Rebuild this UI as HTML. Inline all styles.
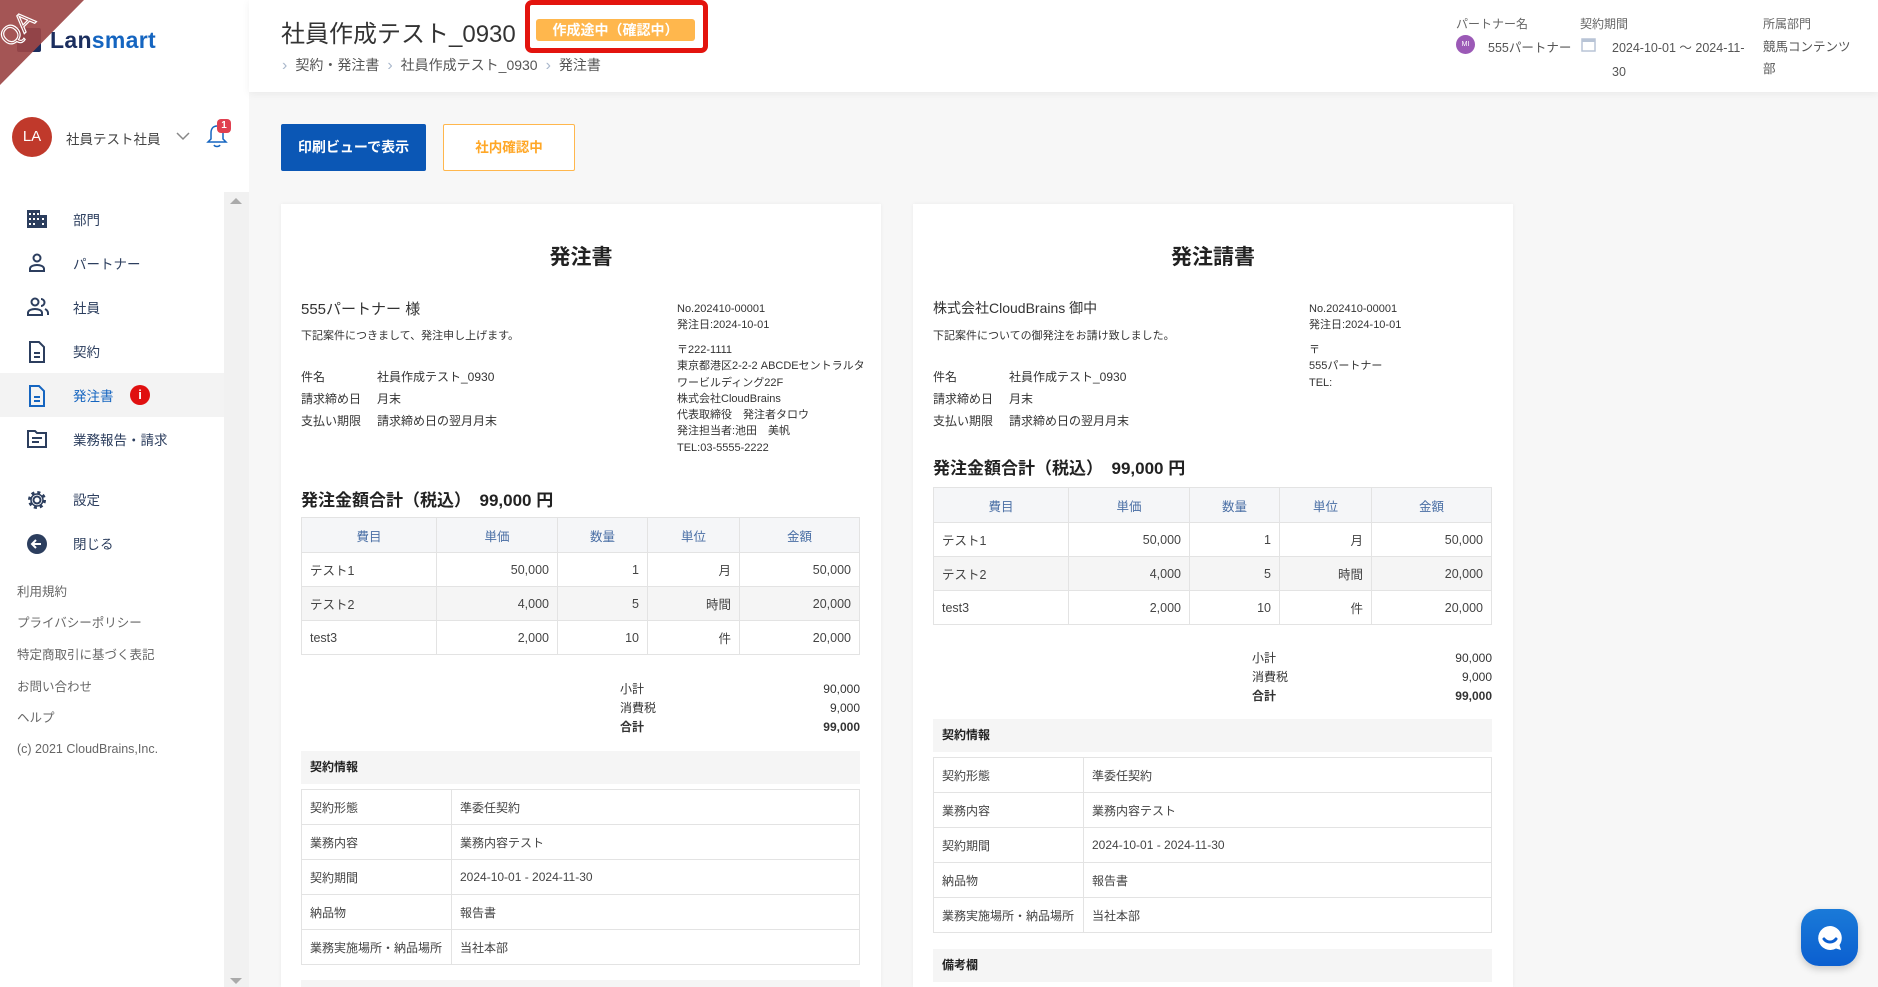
<!DOCTYPE html>
<html style="overflow:hidden;height:987px"><head><meta charset="utf-8"><style>
*{box-sizing:border-box;margin:0;padding:0}
body{width:1878px;height:987px;overflow:hidden;background:#f7f7f7;font-family:"Liberation Sans","Noto Sans CJK JP",sans-serif;color:#333;position:relative}
.a{position:absolute;white-space:nowrap}
#side{position:absolute;left:0;top:0;width:249px;height:987px;background:#fff}
.nav{position:absolute;left:0;width:224px;height:44px;display:flex;align-items:center;font-size:13.5px;color:#2c3e5e}
.nav svg{position:absolute;left:26px;top:12px}
.nav span{position:absolute;left:73px}
.foot{position:absolute;left:17px;font-size:12.5px;color:#666}
#hdr{position:absolute;left:249px;top:0;width:1629px;height:92px;background:#fff;box-shadow:0 2px 8px rgba(0,0,0,.06)}
.card{position:absolute;top:204px;width:600px;height:783px;background:#fff;box-shadow:0 0 4px rgba(0,0,0,.05);overflow:hidden}
.card .a{font-size:12px;color:#333}
table{border-collapse:collapse;position:absolute;left:20px;width:559px;font-size:12.5px;color:#444}
.it td,.it th{border:1px solid #e3e3e3;height:34px;padding:0 8px}
.it th{background:#f5f6f8;color:#4a6fa5;font-weight:normal;height:35px}
.it tr:nth-child(3) td{background:#f5f5f5}
.it td.r{text-align:right}
.bar{position:absolute;left:20px;width:559px;height:33px;background:#f5f5f5;font-size:12px;font-weight:bold;padding:0 9px;line-height:33px;color:#222}
.ci td{border:1px solid #e3e3e3;height:35px;padding:0 8px;font-size:12px}
.ci td:first-child{width:150px}
.rc{position:absolute;left:396px;font-size:11px;line-height:16.3px;color:#333}
.sum{position:absolute;left:339px;width:240px;font-size:12px;line-height:19px}
.sum div{display:flex;justify-content:space-between}
.bc{color:#aab8cc;font-size:16px;margin:0 8px}
</style></head><body>

<div id="side">
  <div class="a" style="left:17px;top:28px;width:24px;height:24px;background:#1b2e5e;border-radius:2px"></div>
  <div class="a" style="left:50px;top:27px;font-size:23px;font-weight:bold;color:#1b2e5e;letter-spacing:.3px">Lan<span style="color:#1565c0">smart</span></div>
  <svg class="a" style="left:0;top:0" width="90" height="90"><polygon points="0,0 84,0 0,85" fill="#9c4747" opacity=".92"/><text x="0" y="0" transform="translate(10 48) rotate(-45)" font-size="26" fill="none" stroke="#fff" stroke-width="1.2" font-family="Liberation Sans">QA</text></svg>
  <div class="a" style="left:12px;top:117px;width:40px;height:40px;border-radius:50%;background:#c0392b;color:#fff;font-size:15px;text-align:center;line-height:40px">LA</div>
  <div class="a" style="left:66px;top:128px;font-size:13.5px;color:#444">社員テスト社員</div>
  <svg class="a" style="left:175px;top:130px" width="16" height="12"><path d="M2 3l6 6 6-6" stroke="#888" stroke-width="1.5" fill="none"/></svg>
  <svg class="a" style="left:205px;top:122px" width="24" height="28"><path d="M12 4c-4 0-6 3-6 7v6l-3 3h18l-3-3v-6c0-4-2-7-6-7zM9 23c1 2 5 2 6 0" stroke="#1565c0" stroke-width="1.5" fill="none"/></svg>
  <div class="a" style="left:217px;top:119px;width:14px;height:14px;border-radius:4px;background:#e04050;color:#fff;font-size:10px;font-weight:bold;text-align:center;line-height:14px">1</div>

  <div class="a" style="left:224px;top:192px;width:25px;height:795px;background:#f1f1f1"></div>
  <svg class="a" style="left:229px;top:197px" width="14" height="8"><path d="M1 7l6-6 6 6z" fill="#aaa"/></svg>
  <svg class="a" style="left:229px;top:977px" width="14" height="8"><path d="M1 1l6 6 6-6z" fill="#aaa"/></svg>

  <div class="nav" style="top:197px"><svg width="22" height="20"><rect x="1" y="1" width="13" height="18" fill="#2c3e5e"/><rect x="14" y="6" width="7" height="13" fill="#2c3e5e"/><g fill="#fff"><rect x="3" y="4" width="2" height="2"/><rect x="7" y="4" width="2" height="2"/><rect x="11" y="4" width="2" height="2"/><rect x="3" y="9" width="2" height="2"/><rect x="7" y="9" width="2" height="2"/><rect x="11" y="9" width="2" height="2"/><rect x="3" y="14" width="2" height="2"/><rect x="7" y="14" width="2" height="2"/><rect x="16" y="9" width="2" height="2"/><rect x="16" y="14" width="2" height="2"/></g></svg><span>部門</span></div>
  <div class="nav" style="top:241px"><svg width="22" height="20"><circle cx="11" cy="5" r="3.5" stroke="#2c3e5e" stroke-width="2" fill="none"/><path d="M4 18v-2c0-3 4-4 7-4s7 1 7 4v2z" stroke="#2c3e5e" stroke-width="2" fill="none"/></svg><span>パートナー</span></div>
  <div class="nav" style="top:285px"><svg width="24" height="20"><circle cx="9" cy="5" r="3.5" stroke="#2c3e5e" stroke-width="2" fill="none"/><path d="M2 18v-2c0-3 4-4 7-4s7 1 7 4v2z" stroke="#2c3e5e" stroke-width="2" fill="none"/><path d="M15 2a3.5 3.5 0 010 7M19 12c2 1 3 2 3 4v2" stroke="#2c3e5e" stroke-width="2" fill="none"/></svg><span>社員</span></div>
  <div class="nav" style="top:329px"><svg width="22" height="22"><path d="M4 1h9l5 5v15H4z" stroke="#2c3e5e" stroke-width="2" fill="none"/><path d="M8 12h6M8 16h6" stroke="#2c3e5e" stroke-width="2"/></svg><span>契約</span></div>
  <div class="nav" style="top:373px;background:#f3f3f3;color:#1565c0"><svg width="22" height="22"><path d="M4 1h9l5 5v15H4z" stroke="#1565c0" stroke-width="2" fill="none"/><path d="M8 12h6M8 16h6" stroke="#1565c0" stroke-width="2"/></svg><span>発注書</span><div class="a" style="left:130px;top:12px;width:20px;height:20px;border-radius:50%;background:#e01010;color:#fff;font-size:13px;font-weight:bold;text-align:center;line-height:20px">i</div></div>
  <div class="nav" style="top:417px"><svg width="22" height="20"><path d="M2 2h7l2 2h9v14H2z" stroke="#2c3e5e" stroke-width="2" fill="none"/><path d="M6 9h10M6 13h7" stroke="#2c3e5e" stroke-width="2"/></svg><span>業務報告・請求</span></div>
  <div class="nav" style="top:477px"><svg width="22" height="22"><circle cx="11" cy="11" r="3.5" stroke="#2c3e5e" stroke-width="2" fill="none"/><circle cx="11" cy="11" r="7.5" stroke="#2c3e5e" stroke-width="3" stroke-dasharray="3 2.9" fill="none"/><circle cx="11" cy="11" r="6" stroke="#2c3e5e" stroke-width="1.5" fill="none"/></svg><span>設定</span></div>
  <div class="nav" style="top:521px"><svg width="22" height="22"><circle cx="11" cy="11" r="10" fill="#2c3e5e"/><path d="M15 11H7M10 7l-4 4 4 4" stroke="#fff" stroke-width="2" fill="none"/></svg><span>閉じる</span></div>

  <div class="foot" style="top:581px">利用規約</div>
  <div class="foot" style="top:612px">プライバシーポリシー</div>
  <div class="foot" style="top:644px">特定商取引に基づく表記</div>
  <div class="foot" style="top:676px">お問い合わせ</div>
  <div class="foot" style="top:707px">ヘルプ</div>
  <div class="foot" style="top:742px">(c) 2021 CloudBrains,Inc.</div>
</div>

<div id="hdr"></div>
<div class="a" style="left:281px;top:14px;font-size:24px;color:#333">社員作成テスト_0930</div>
<div class="a" style="left:536px;top:19px;width:159px;height:22px;background:#ffb74d;border-radius:3px;color:#fff;font-weight:bold;font-size:14px;text-align:center;line-height:22px">作成途中（確認中）</div>
<div class="a" style="left:525px;top:0;width:183px;height:53px;border:5px solid #e3140e;border-radius:7px"></div>
<div class="a" style="left:282px;top:55px;font-size:14px;color:#555"><span class="bc" style="margin-left:0">›</span>契約・発注書<span class="bc">›</span>社員作成テスト_0930<span class="bc">›</span>発注書</div>

<div class="a" style="left:1456px;top:15px;font-size:12px;color:#666">パートナー名</div>
<div class="a" style="left:1456px;top:35px;width:19px;height:19px;border-radius:50%;background:#9b59b6;color:#fff;font-size:7px;text-align:center;line-height:19px">MI</div>
<div class="a" style="left:1488px;top:37px;font-size:12.5px;color:#555">555パートナー</div>
<div class="a" style="left:1580px;top:15px;font-size:12px;color:#666">契約期間</div>
<svg class="a" style="left:1581px;top:36px" width="15" height="16"><rect x="1" y="3" width="13" height="12" stroke="#b8c4d6" stroke-width="1.5" fill="none"/><rect x="1" y="3" width="13" height="3" fill="#b8c4d6"/></svg>
<div class="a" style="left:1612px;top:36px;font-size:12.5px;color:#555;line-height:24px;white-space:normal;width:140px">2024-10-01 ～ 2024-11-<br>30</div>
<div class="a" style="left:1763px;top:15px;font-size:12px;color:#666">所属部門</div>
<div class="a" style="left:1763px;top:36px;font-size:12.5px;color:#555;line-height:22px">競馬コンテンツ<br>部</div>

<div class="a" style="left:281px;top:124px;width:145px;height:47px;background:#0b57b5;border-radius:2px;color:#fff;font-size:14px;font-weight:bold;text-align:center;line-height:47px">印刷ビューで表示</div>
<div class="a" style="left:443px;top:124px;width:132px;height:47px;background:#fff;border:1px solid #ffb74d;border-radius:2px;color:#ffa726;font-size:13.5px;font-weight:bold;text-align:center;line-height:45px">社内確認中</div>

<!-- card 1 -->
<div class="card" style="left:281px">
  <div class="a" style="left:0;width:600px;top:37px;text-align:center;font-size:21px;font-weight:bold;color:#222">発注書</div>
  <div class="a" style="left:20px;top:94px;font-size:15px;color:#333">555パートナー 様</div>
  <div class="a" style="left:20px;top:123px;font-size:11px">下記案件につきまして、発注申し上げます。</div>
  <div class="a" style="left:20px;top:164px;font-size:12px">件名</div><div class="a" style="left:96px;top:164px;font-size:12px">社員作成テスト_0930</div>
  <div class="a" style="left:20px;top:186px;font-size:12px">請求締め日</div><div class="a" style="left:96px;top:186px;font-size:12px">月末</div>
  <div class="a" style="left:20px;top:208px;font-size:12px">支払い期限</div><div class="a" style="left:96px;top:208px;font-size:12px">請求締め日の翌月月末</div>
  <div class="rc" style="top:97px">No.202410-00001<br>発注日:2024-10-01</div>
  <div class="rc" style="top:138px">〒222-1111<br>東京都港区2-2-2 ABCDEセントラルタ<br>ワービルディング22F<br>株式会社CloudBrains<br>代表取締役　発注者タロウ<br>発注担当者:池田　美帆<br>TEL:03-5555-2222</div>
  <div class="a" style="left:20px;top:282px;font-size:17px;font-weight:bold;color:#222">発注金額合計（税込）　99,000 円</div>
  <table class="it" style="top:313px"><tr><th style="width:135px">費目</th><th style="width:121px">単価</th><th style="width:90px">数量</th><th style="width:92px">単位</th><th>金額</th></tr>
  <tr><td>テスト1</td><td class="r">50,000</td><td class="r">1</td><td class="r">月</td><td class="r">50,000</td></tr>
  <tr><td>テスト2</td><td class="r">4,000</td><td class="r">5</td><td class="r">時間</td><td class="r">20,000</td></tr>
  <tr><td>test3</td><td class="r">2,000</td><td class="r">10</td><td class="r">件</td><td class="r">20,000</td></tr></table>
  <div class="sum" style="top:476px"><div><span>小計</span><span>90,000</span></div><div><span>消費税</span><span>9,000</span></div><div style="font-weight:bold"><span>合計</span><span>99,000</span></div></div>
  <div class="bar" style="top:547px">契約情報</div>
  <table class="ci" style="top:585px"><tr><td>契約形態</td><td>準委任契約</td></tr><tr><td>業務内容</td><td>業務内容テスト</td></tr><tr><td>契約期間</td><td>2024-10-01 - 2024-11-30</td></tr><tr><td>納品物</td><td>報告書</td></tr><tr><td>業務実施場所・納品場所</td><td>当社本部</td></tr></table>
  <div class="bar" style="top:776px"></div>
</div>

<!-- card 2 -->
<div class="card" style="left:913px">
  <div class="a" style="left:0;width:600px;top:37px;text-align:center;font-size:21px;font-weight:bold;color:#222">発注請書</div>
  <div class="a" style="left:20px;top:94px;font-size:14px;color:#333">株式会社CloudBrains 御中</div>
  <div class="a" style="left:20px;top:123px;font-size:11px">下記案件についての御発注をお請け致しました。</div>
  <div class="a" style="left:20px;top:164px;font-size:12px">件名</div><div class="a" style="left:96px;top:164px;font-size:12px">社員作成テスト_0930</div>
  <div class="a" style="left:20px;top:186px;font-size:12px">請求締め日</div><div class="a" style="left:96px;top:186px;font-size:12px">月末</div>
  <div class="a" style="left:20px;top:208px;font-size:12px">支払い期限</div><div class="a" style="left:96px;top:208px;font-size:12px">請求締め日の翌月月末</div>
  <div class="rc" style="top:97px">No.202410-00001<br>発注日:2024-10-01</div>
  <div class="rc" style="top:138px">〒<br>555パートナー<br>TEL:</div>
  <div class="a" style="left:20px;top:250px;font-size:17px;font-weight:bold;color:#222">発注金額合計（税込）　99,000 円</div>
  <table class="it" style="top:283px"><tr><th style="width:135px">費目</th><th style="width:121px">単価</th><th style="width:90px">数量</th><th style="width:92px">単位</th><th>金額</th></tr>
  <tr><td>テスト1</td><td class="r">50,000</td><td class="r">1</td><td class="r">月</td><td class="r">50,000</td></tr>
  <tr><td>テスト2</td><td class="r">4,000</td><td class="r">5</td><td class="r">時間</td><td class="r">20,000</td></tr>
  <tr><td>test3</td><td class="r">2,000</td><td class="r">10</td><td class="r">件</td><td class="r">20,000</td></tr></table>
  <div class="sum" style="top:445px"><div><span>小計</span><span>90,000</span></div><div><span>消費税</span><span>9,000</span></div><div style="font-weight:bold"><span>合計</span><span>99,000</span></div></div>
  <div class="bar" style="top:515px">契約情報</div>
  <table class="ci" style="top:553px"><tr><td>契約形態</td><td>準委任契約</td></tr><tr><td>業務内容</td><td>業務内容テスト</td></tr><tr><td>契約期間</td><td>2024-10-01 - 2024-11-30</td></tr><tr><td>納品物</td><td>報告書</td></tr><tr><td>業務実施場所・納品場所</td><td>当社本部</td></tr></table>
  <div class="bar" style="top:745px">備考欄</div>
</div>

<div class="a" style="left:1801px;top:909px;width:57px;height:57px;border-radius:18px;background:linear-gradient(#1a7ad8,#0b5fd0);box-shadow:0 3px 8px rgba(0,0,0,.2)"></div>
<svg class="a" style="left:1812px;top:920px" width="36" height="36"><path d="M18 6a12 12 0 1 0 6 22.5l5 1.5-1.5-5A12 12 0 0 0 18 6z" fill="#fff"/><path d="M12 19c3 4 9 4 12 0" stroke="#0b5fd0" stroke-width="3" fill="none" stroke-linecap="round"/></svg>
</body></html>
